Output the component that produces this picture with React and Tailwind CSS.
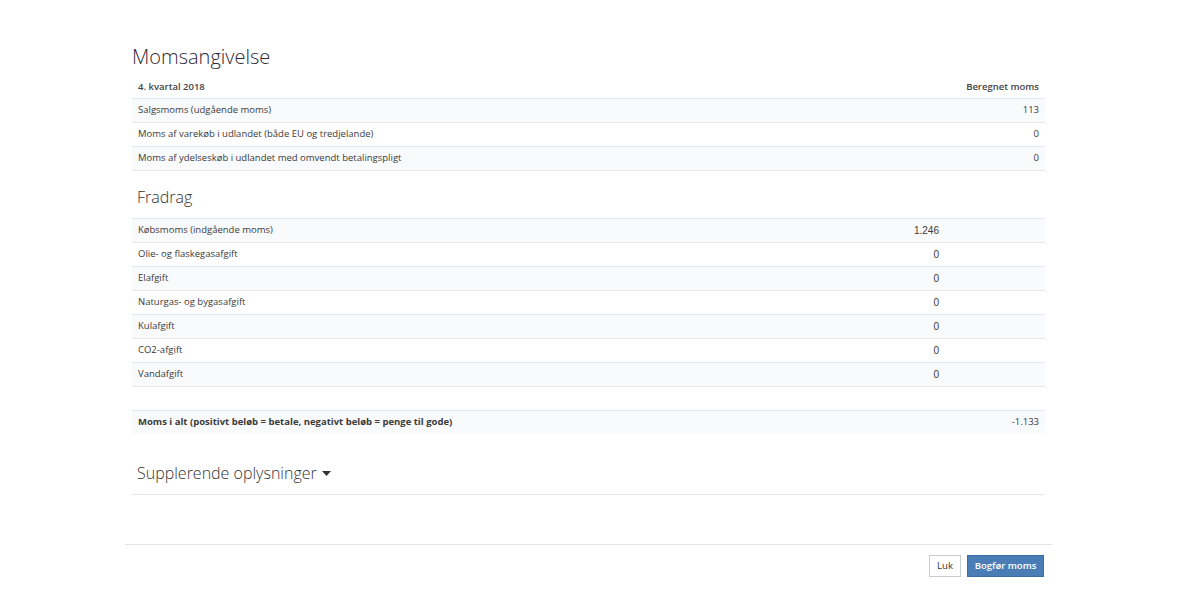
import React from 'react';

const salesRows = [
  { label: 'Salgsmoms (udgående moms)', value: '113' },
  { label: 'Moms af varekøb i udlandet (både EU og tredjelande)', value: '0' },
  { label: 'Moms af ydelseskøb i udlandet med omvendt betalingspligt', value: '0' },
];

const deductionRows = [
  { label: 'Købsmoms (indgående moms)', value: '1.246' },
  { label: 'Olie- og flaskegasafgift', value: '0' },
  { label: 'Elafgift', value: '0' },
  { label: 'Naturgas- og bygasafgift', value: '0' },
  { label: 'Kulafgift', value: '0' },
  { label: 'CO2-afgift', value: '0' },
  { label: 'Vandafgift', value: '0' },
];

const cell = 'h-[24px] px-[6px] py-0 align-middle';

const App = () => {
  return (
    <div className="min-h-[600px] bg-white font-['Open_Sans',sans-serif] text-[9.5px] text-[#3a3a3a]">
      <div className="ml-[125px] w-[927px]">
        {/* Body */}
        <div className="px-[7px] pt-[44px]">
          <h1 className="h-[26px] text-[20px] font-light leading-[26px] text-[#2d2a35]">Momsangivelse</h1>

          {/* Udgående moms */}
          <table className="mt-[5px] w-full border-collapse">
            <thead>
              <tr>
                <th className="h-[23px] px-[6px] pt-[2px] pb-0 text-left font-semibold text-[#444]">4. kvartal 2018</th>
                <th className="h-[23px] px-[6px] pt-[2px] pb-0 text-right font-semibold text-[#444]">Beregnet moms</th>
              </tr>
            </thead>
            <tbody>
              {salesRows.map((row, i) => (
                <tr
                  key={row.label}
                  className={`border-t border-[#e6e7ec] ${i === salesRows.length - 1 ? 'border-b' : ''} ${i % 2 === 0 ? 'bg-[#f9fafc]' : 'bg-white'}`}
                >
                  <td className={`${cell} text-left`}>{row.label}</td>
                  <td className={`${cell} text-right`}>{row.value}</td>
                </tr>
              ))}
            </tbody>
          </table>

          {/* Fradrag */}
          <h2 className="mt-[14px] mb-[9px] h-[24px] pl-[5px] text-[16px] font-light leading-[24px] text-[#333]">Fradrag</h2>
          <table className="w-full border-collapse">
            <tbody>
              {deductionRows.map((row, i) => (
                <tr
                  key={row.label}
                  className={`border-t border-[#e6e7ec] ${i % 2 === 0 ? 'bg-[#f9fafc]' : 'bg-white'}`}
                >
                  <td className={`${cell} text-left`}>{row.label}</td>
                  <td className={`${cell} text-right font-['Liberation_Sans',Arial,sans-serif] text-[10px]`}>{row.value}</td>
                  <td className={`${cell} w-[100px]`}></td>
                </tr>
              ))}
              <tr className="border-t border-[#e6e7ec] bg-white">
                <td className={cell} colSpan={3}></td>
              </tr>
              <tr className="border-t border-[#e6e7ec] bg-[#f9fafc]">
                <td className={`${cell} text-left font-bold`} colSpan={2}>
                  Moms i alt (positivt beløb = betale, negativt beløb = penge til gode)
                </td>
                <td className={`${cell} w-[100px] text-right`}>-1.133</td>
              </tr>
            </tbody>
          </table>

          {/* Supplerende oplysninger */}
          <div className="mt-[27px] flex items-center border-b border-[#e6e7ec] pb-[9px] pl-[5px]">
            <span className="h-[24px] text-[16px] font-light leading-[24px] text-[#333]">Supplerende oplysninger</span>
            <svg className="ml-[5px] mt-[1px]" width="9" height="5" viewBox="0 0 9 5">
              <path d="M0 0h9L4.5 5z" fill="#333" />
            </svg>
          </div>
        </div>

        {/* Footer */}
        <div className="mt-[49px] flex justify-end gap-[6px] border-t border-[#e3e3e3] px-[8px] pt-[10px]">
          <button className="h-[22px] w-[32px] border border-[#cccccc] bg-white text-[9.5px] text-[#333]">Luk</button>
          <button className="h-[22px] w-[77px] border border-[#3c6ea6] bg-[#4a7db6] text-[9.5px] font-semibold text-white">
            Bogfør moms
          </button>
        </div>
      </div>
    </div>
  );
};

export default App;
